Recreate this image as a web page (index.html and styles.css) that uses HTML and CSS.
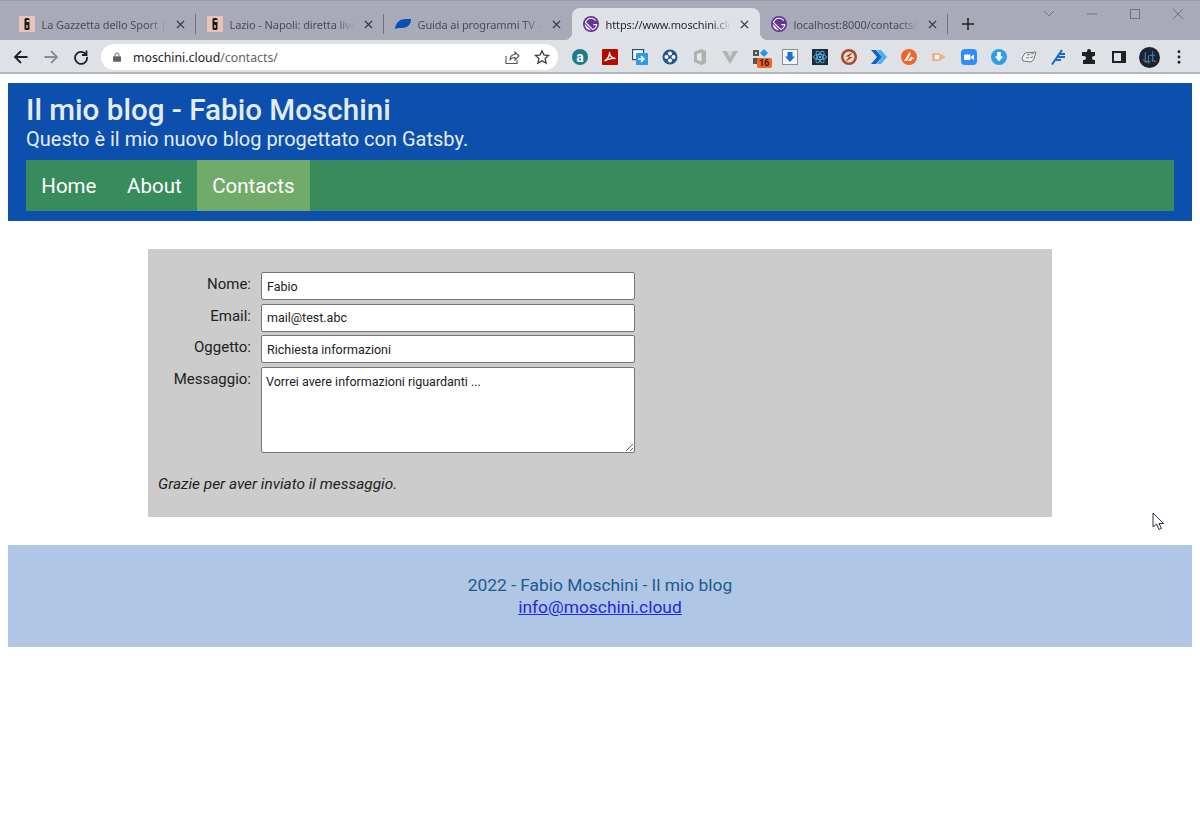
FILE: index.html
```html
<!DOCTYPE html>
<html lang="it">
<head>
<meta charset="utf-8">
<title>Contacts</title>
<link rel="stylesheet" href="styles.css">
</head>
<body>
<div class="browser">
  <div class="tabstrip">
    <div class="tab sep">
      <svg class="fav" viewBox="0 0 16 16"><rect width="16" height="16" fill="#eac3b8"/><rect x="5.500" y="2" width="5" height="12" rx="1.500" fill="#1a1a1a"/><rect x="7.500" y="4" width="3" height="2" fill="#eac3b8"/><rect x="7.300" y="9" width="1.400" height="3" fill="#eac3b8"/></svg>
      <span class="tab-title">La Gazzetta dello Sport | Tutte le</span>
      <svg class="close" viewBox="0 0 10 10"><path d="M1 1l8 8M9 1l-8 8"/></svg>
    </div>
    <div class="tab sep">
      <svg class="fav" viewBox="0 0 16 16"><rect width="16" height="16" fill="#eac3b8"/><rect x="5.500" y="2" width="5" height="12" rx="1.500" fill="#1a1a1a"/><rect x="7.500" y="4" width="3" height="2" fill="#eac3b8"/><rect x="7.300" y="9" width="1.400" height="3" fill="#eac3b8"/></svg>
      <span class="tab-title">Lazio - Napoli: diretta live e rist</span>
      <svg class="close" viewBox="0 0 10 10"><path d="M1 1l8 8M9 1l-8 8"/></svg>
    </div>
    <div class="tab">
      <svg class="fav" viewBox="0 0 16 16"><path d="M0 13C1 6 5 3 11 3h5c0 5-3 9-9 9H3z" fill="#0b4eb0"/></svg>
      <span class="tab-title">Guida ai programmi TV - Sky</span>
      <svg class="close" viewBox="0 0 10 10"><path d="M1 1l8 8M9 1l-8 8"/></svg>
    </div>
    <div class="tab active">
      <svg class="fav" viewBox="0 0 28 28"><circle cx="14" cy="14" r="14" fill="#663399"/><path fill="#fff" d="M6.200 21.800C4.100 19.700 3 16.900 3 14.200L13.900 25c-2.800-.1-5.600-1.100-7.700-3.200zm10.200 2.900L3.300 11.600C4.400 6.700 8.800 3 14 3c3.700 0 6.900 1.800 8.900 4.500l-1.500 1.300C19.700 6.500 17 5 14 5c-3.900 0-7.200 2.500-8.500 6L17 22.500c2.900-1 5.100-3.500 5.800-6.500H18v-2h7c0 5.200-3.700 9.600-8.600 10.700z"/></svg>
      <span class="tab-title">https://www.moschini.cloud/contacts</span>
      <svg class="close" viewBox="0 0 10 10"><path d="M1 1l8 8M9 1l-8 8"/></svg>
    </div>
    <div class="tab sep">
      <svg class="fav" viewBox="0 0 28 28"><circle cx="14" cy="14" r="14" fill="#663399"/><path fill="#fff" d="M6.200 21.800C4.100 19.700 3 16.900 3 14.200L13.900 25c-2.800-.1-5.600-1.100-7.700-3.200zm10.200 2.900L3.300 11.600C4.400 6.700 8.800 3 14 3c3.700 0 6.900 1.800 8.900 4.500l-1.500 1.300C19.700 6.500 17 5 14 5c-3.900 0-7.200 2.500-8.500 6L17 22.500c2.900-1 5.100-3.500 5.800-6.500H18v-2h7c0 5.200-3.700 9.600-8.600 10.700z"/></svg>
      <span class="tab-title">localhost:8000/contacts/</span>
      <svg class="close" viewBox="0 0 10 10"><path d="M1 1l8 8M9 1l-8 8"/></svg>
    </div>
    <svg class="newtab" viewBox="0 0 12 12"><path d="M6 0v12M0 6h12"/></svg>
    <div class="winctl">
      <svg class="ctl" viewBox="0 0 14 14"><path d="M2 4l5 5 5-5"/></svg>
      <svg class="ctl" viewBox="0 0 14 14"><path d="M2 7h10"/></svg>
      <svg class="ctl" viewBox="0 0 14 14"><rect x="2.500" y="2.500" width="9" height="9"/></svg>
      <svg class="ctl" viewBox="0 0 14 14"><path d="M2 2l10 10M12 2L2 12"/></svg>
    </div>
  </div>
  <div class="toolbar">
    <svg class="nav-ic" viewBox="0 0 16 16"><path d="M14.500 8H2M8 2L2 8l6 6"/></svg>
    <svg class="nav-ic off" viewBox="0 0 16 16"><path d="M1.500 8H14M8 2l6 6-6 6"/></svg>
    <svg class="nav-ic" viewBox="0 0 16 16"><path d="M13 5.500A6 6 0 1 0 14 8M13.500 1.500v4.500H9"/></svg>
    <div class="omnibox">
      <svg class="lock" viewBox="0 0 10 12"><path d="M2.500 5V3.500a2.500 2.500 0 0 1 5 0V5" fill="none" stroke="#5f6368" stroke-width="1.200"/><rect y="5" width="10" height="7" rx="1" fill="#5f6368"/></svg>
      <span class="url"><b>moschini.cloud</b>/contacts/</span>
      <svg class="omni-ic share" viewBox="0 0 16 16"><path d="M2 7v7.500h11V11M6 10.500C6.500 7 9 5.500 11 5.500V3l4 4-4 4V8.500c-2 0-3.500.5-5 2z"/></svg>
      <svg class="omni-ic star" viewBox="0 0 16 16"><path d="M8 1.800l1.900 4.200 4.600.5-3.400 3.100 1 4.500L8 11.800l-4.100 2.300 1-4.500L1.500 6.500 6.100 6z"/></svg>
    </div>
    <div class="exts">
      <svg class="ext" viewBox="0 0 16 16"><circle cx="8" cy="8" r="8" fill="#1f7a8c"/><text x="8" y="12.500" class="ext-letter">a</text></svg>
      <svg class="ext" viewBox="0 0 16 16"><rect width="16" height="16" rx="1" fill="#b30b00"/><path d="M2.500 12C6 10 8 6 7.500 3c0 4 2.500 6 6 6.500-3.500-.5-8 .5-11 2.500z" fill="none" stroke="#fff" stroke-width="1.300"/></svg>
      <svg class="ext" viewBox="0 0 16 16"><rect x=".6" y=".6" width="11" height="10" fill="#fff" stroke="#274b7a" stroke-width="1.200"/><rect x="4" y="4" width="12" height="12" rx="1" fill="#2e9bea"/><path d="M6 10h5M9 7l3 3-3 3" fill="none" stroke="#fff" stroke-width="1.600"/></svg>
      <svg class="ext" viewBox="0 0 16 16"><circle cx="8" cy="8" r="7.500" fill="#26558f"/><circle cx="8" cy="4.500" r="2" fill="#fff"/><circle cx="8" cy="11.500" r="2" fill="#fff"/><circle cx="4.500" cy="8" r="2" fill="#fff"/><circle cx="11.500" cy="8" r="2" fill="#fff"/></svg>
      <svg class="ext" viewBox="0 0 16 16"><path d="M9.500 0L14 2v12l-4.500 2L2 13V3z" fill="#b0b0b0"/><path d="M5 5l4.500-1.500v9L5 11z" fill="#e6e6e6"/></svg>
      <svg class="ext" viewBox="0 0 16 16"><path d="M0 2h5l3 6 3-6h5L8 15z" fill="#b3b3b3"/><path d="M5 2h2.500L8 3.500 8.500 2H11L8 8z" fill="#d5d5d5"/></svg>
      <span class="ext-wrap">
        <svg class="ext" viewBox="0 0 16 16"><rect x="1" y="1" width="6" height="6" fill="#555"/><rect x="1" y="9" width="6" height="6" fill="#555"/><rect x="3" y="3" width="2" height="2" fill="#ccc"/><path d="M12 0l4 4-4 4-4-4z" fill="#2196f3"/></svg>
        <span class="badge">16</span>
      </span>
      <svg class="ext" viewBox="0 0 16 16"><rect x=".5" y=".5" width="15" height="15" fill="#f4f4f4" stroke="#8b8f96"/><path d="M5.500 3h5v4.500h2.500L8 13 3 7.500h2.500z" fill="#1d6fd6"/></svg>
      <svg class="ext" viewBox="0 0 16 16"><rect width="16" height="16" fill="#202a38"/><g fill="none" stroke="#4fb9e8" stroke-width=".9"><ellipse cx="8" cy="8" rx="6.500" ry="2.600"/><ellipse cx="8" cy="8" rx="6.500" ry="2.600" transform="rotate(60 8 8)"/><ellipse cx="8" cy="8" rx="6.500" ry="2.600" transform="rotate(120 8 8)"/></g><circle cx="8" cy="8" r="1.300" fill="#4fb9e8"/></svg>
      <svg class="ext" viewBox="0 0 16 16"><circle cx="8" cy="8" r="8" fill="#a8482c"/><circle cx="8" cy="8" r="5.500" fill="#e4dccd"/><path d="M12 3L4.500 7.500h4L4 13l7.500-5h-4z" fill="#c1201a"/></svg>
      <svg class="ext" viewBox="0 0 16 16"><path d="M0 1h5l6 7-6 7H0l6-7z" fill="#0f62c9"/><path d="M6 1h4l6 7-6 7H6l5-7z" fill="#49b0f0"/></svg>
      <svg class="ext" viewBox="0 0 16 16"><circle cx="8" cy="8" r="8" fill="#f4622a"/><path d="M3 12L8.500 3l1.500 1L6 12zM7 12l3-4 1.500 1L10 12zM10 7.500l3 1.500v1.500l-3-1.500z" fill="#fff"/></svg>
      <svg class="ext" viewBox="0 0 16 16"><path d="M1 4h7l7 4-7 4H1z" fill="#f0b088"/><rect x="4" y="6" width="4" height="4" fill="#fff"/></svg>
      <svg class="ext" viewBox="0 0 16 16"><rect width="16" height="16" rx="4" fill="#2d8cff"/><rect x="3" y="5.500" width="6.500" height="5.500" rx="1" fill="#fff"/><path d="M10.300 7.500l2.700-2v5.500l-2.700-2z" fill="#fff"/></svg>
      <svg class="ext" viewBox="0 0 16 16"><circle cx="8" cy="8" r="8" fill="#2f9ee8"/><path d="M6.200 3h3.600v4.500h2.400L8 12.500 3.800 7.500h2.400z" fill="#fff"/></svg>
      <svg class="ext" viewBox="0 0 16 16"><path d="M1 9l3-5 11-1-2 7-3 3-8-1z" fill="#eee" stroke="#777" stroke-width="1"/><path d="M6 6l3-.5M10 5l3-.5M5 9l3-.5M9 8.500l3-.5" stroke="#777" stroke-width=".9"/></svg>
      <svg class="ext" viewBox="0 0 16 16"><path d="M1 15.500L11 1M4 11h6M6 8h8M8.500 5h5.500" fill="none" stroke="#1a68d0" stroke-width="2"/></svg>
      <svg class="ext" viewBox="0 0 16 16"><path d="M6 2a2 2 0 0 1 4 0v1h4v4h-1a2 2 0 0 0 0 4h1v4H2v-4h1a2 2 0 0 0 0-4H1V3h5z" fill="#202124"/></svg>
      <svg class="ext" viewBox="0 0 16 16"><rect x="1" y="2" width="14" height="12" fill="#202124"/><rect x="3" y="4" width="7" height="8" fill="#dee1e6"/></svg>
      <svg class="avatar" viewBox="0 0 20 20"><circle cx="10" cy="10" r="10" fill="#1c2433"/><path d="M6 5v9h5M9 8v8M13 4v10M15 8h-5" fill="none" stroke="#3f77a8" stroke-width="1.200"/><path d="M4 12l3 3M12 12l4 2" stroke="#a3622e" stroke-width="1"/></svg>
      <svg class="menu" viewBox="0 0 4 16"><circle cx="2" cy="2" r="1.600"/><circle cx="2" cy="8" r="1.600"/><circle cx="2" cy="14" r="1.600"/></svg>
    </div>
  </div>
</div>

<div class="page">
  <header class="site-head">
    <h1>Il mio blog - Fabio Moschini</h1>
    <p class="tagline">Questo è il mio nuovo blog progettato con Gatsby.</p>
    <nav class="site-nav">
      <a href="#">Home</a>
      <a href="#">About</a>
      <a href="#" class="current">Contacts</a>
    </nav>
  </header>
  <main class="content">
    <form class="contact">
      <label for="nome">Nome:</label>
      <input id="nome" type="text" value="Fabio">
      <label for="email">Email:</label>
      <input id="email" type="text" value="mail@test.abc">
      <label for="oggetto">Oggetto:</label>
      <input id="oggetto" type="text" value="Richiesta informazioni">
      <label for="msg">Messaggio:</label>
      <textarea id="msg">Vorrei avere informazioni riguardanti ...</textarea>
    </form>
    <p class="thanks">Grazie per aver inviato il messaggio.</p>
  </main>
  <footer class="site-foot">
    <span>2022 - Fabio Moschini - Il mio blog</span>
    <a href="#">info@moschini.cloud</a>
  </footer>
</div>
<svg class="cursor" viewBox="0 0 13 19"><path d="M1 1v14l3.500-3 2.500 5.500 2.500-1L7 11.500h4.500z"/></svg>
</body>
</html>
```
FILE: styles.css
```css
* { box-sizing: border-box; }
html, body { margin: 0; height: 100%; }
body { background: #fff; font-family: Roboto, sans-serif; position: relative; overflow: hidden; }

.browser { display: flex; flex-direction: column; font-family: "Noto Sans", sans-serif; }
.tabstrip { height: 40px; background: #a8abb7; border-top: 1px solid #9a9da8; display: flex; align-items: flex-end; padding-left: 8px; }
.tab { position: relative; width: 188px; height: 32px; display: flex; align-items: center; padding: 0 10px 0 11px; color: #4a4c55; }
.tab.sep::after { content: ""; position: absolute; right: 0; top: 6px; height: 20px; width: 1px; background: #70737d; }
.tab.active { background: #dee1e6; border-radius: 8px 8px 0 0; color: #2a2b30; }
.tab.active::before, .tab.active::after { content: ""; position: absolute; bottom: 0; width: 8px; height: 8px; }
.tab.active::before { left: -8px; background: radial-gradient(circle at 0 0, transparent 8px, #dee1e6 8.500px); }
.tab.active::after { right: -8px; background: radial-gradient(circle at 100% 0, transparent 8px, #dee1e6 8.500px); }
.fav { width: 16px; height: 16px; flex: none; }
.tab-title { margin-left: 6.500px; flex: 1; min-width: 0; white-space: nowrap; overflow: hidden; font-size: 11px; letter-spacing: -.1px; -webkit-mask-image: linear-gradient(90deg, #000 85%, transparent); mask-image: linear-gradient(90deg, #000 85%, transparent); }
.close { width: 9px; height: 9px; flex: none; margin-left: 9px; margin-right: 1px; fill: none; stroke: #303136; stroke-width: 1.400; }
.newtab { width: 12px; height: 12px; flex: none; margin: 0 0 10px 14px; fill: none; stroke: #202124; stroke-width: 1.500; }
.winctl { margin-left: auto; align-self: flex-start; display: flex; gap: 29px; padding: 6px 15px 0 0; }
.ctl { width: 14px; height: 14px; fill: none; stroke: #70737d; stroke-width: 1; }

.toolbar { height: 34px; background: #dee1e6; border-bottom: 2px solid #b4b6bb; display: flex; align-items: center; padding: 2px 0 0 13px; }
.nav-ic { width: 16px; height: 16px; flex: none; margin-right: 14px; fill: none; stroke: #202124; stroke-width: 1.800; }
.nav-ic.off { stroke: #8a8c91; }
.omnibox { width: 457px; height: 26px; margin-left: -2px; background: #fff; border-radius: 13px; display: flex; align-items: center; padding: 0 8px 0 12px; }
.lock { width: 8px; height: 10px; flex: none; }
.url { margin-left: 12px; font-size: 12.300px; color: #5f6368; flex: 1; white-space: nowrap; }
.url b { font-weight: 400; color: #202124; }
.omni-ic { width: 16px; height: 16px; flex: none; fill: none; stroke: #50535a; stroke-width: 1.100; }
.share { margin-right: 14px; }
.star { stroke: #3c3e44; stroke-width: 1.300; }
.exts { display: flex; align-items: center; gap: 13.950px; margin-left: 14px; }
.ext { width: 16px; height: 16px; flex: none; display: block; }
.ext-letter { font: 700 14px Roboto, sans-serif; fill: #fff; text-anchor: middle; }
.ext-wrap { position: relative; display: block; width: 16px; height: 16px; }
.badge { position: absolute; left: 5px; top: 9px; width: 15px; height: 10px; border-radius: 2px; background: #f4641e; color: #222; font: 700 9px/10px Roboto, sans-serif; text-align: center; }
.avatar { width: 21px; height: 21px; flex: none; margin: 0 -2px; }
.menu { width: 4px; height: 14px; flex: none; margin-left: 5px; fill: #202124; }

.page { padding: 9px 8px 0; }
.site-head { background: #0d4fac; padding: 9px 18px 10px; color: #e2ecf5; }
.site-head h1 { margin: 0; font-size: 29.600px; line-height: 36px; font-weight: 500; }
.tagline { margin: 0; font-size: 20px; line-height: 22px; }
.site-nav { margin-top: 10px; display: flex; height: 51px; background: #378b5c; }
.site-nav a { display: flex; align-items: center; padding: 0 15.300px; color: #fff; font-size: 20.500px; text-decoration: none; }
.site-nav a.current { background: #70ab69; }

.content { margin: 28px 140px; background: #ccc; padding: 23px 10px 22px; color: #222; }
.contact { display: grid; grid-template-columns: 93px 374px; column-gap: 10px; row-gap: 3.670px; }
.contact label { text-align: right; font-size: 15px; line-height: 24px; }
.contact input, .contact textarea { margin: 0; width: 100%; border: 1px solid #767676; border-radius: 2px; background: #fff; color: #222; font: 12.500px Roboto, sans-serif; }
.contact input { height: 28px; padding: 1px 5px; }
.contact textarea { height: 86px; padding: 6px 4px 2px; display: block; }
.thanks { margin: 20px 0 0; font-size: 15.400px; line-height: 22px; font-style: italic; }

.site-foot { background: #b0c6e5; height: 102px; padding-top: 29px; display: flex; flex-direction: column; align-items: center; font-size: 17.400px; line-height: 22px; color: #1f5a8f; }
.site-foot a { color: #2626e0; }

.cursor { position: absolute; left: 1152px; top: 512px; width: 13px; height: 19px; fill: #fff; stroke: #303040; stroke-width: 1; }
```
